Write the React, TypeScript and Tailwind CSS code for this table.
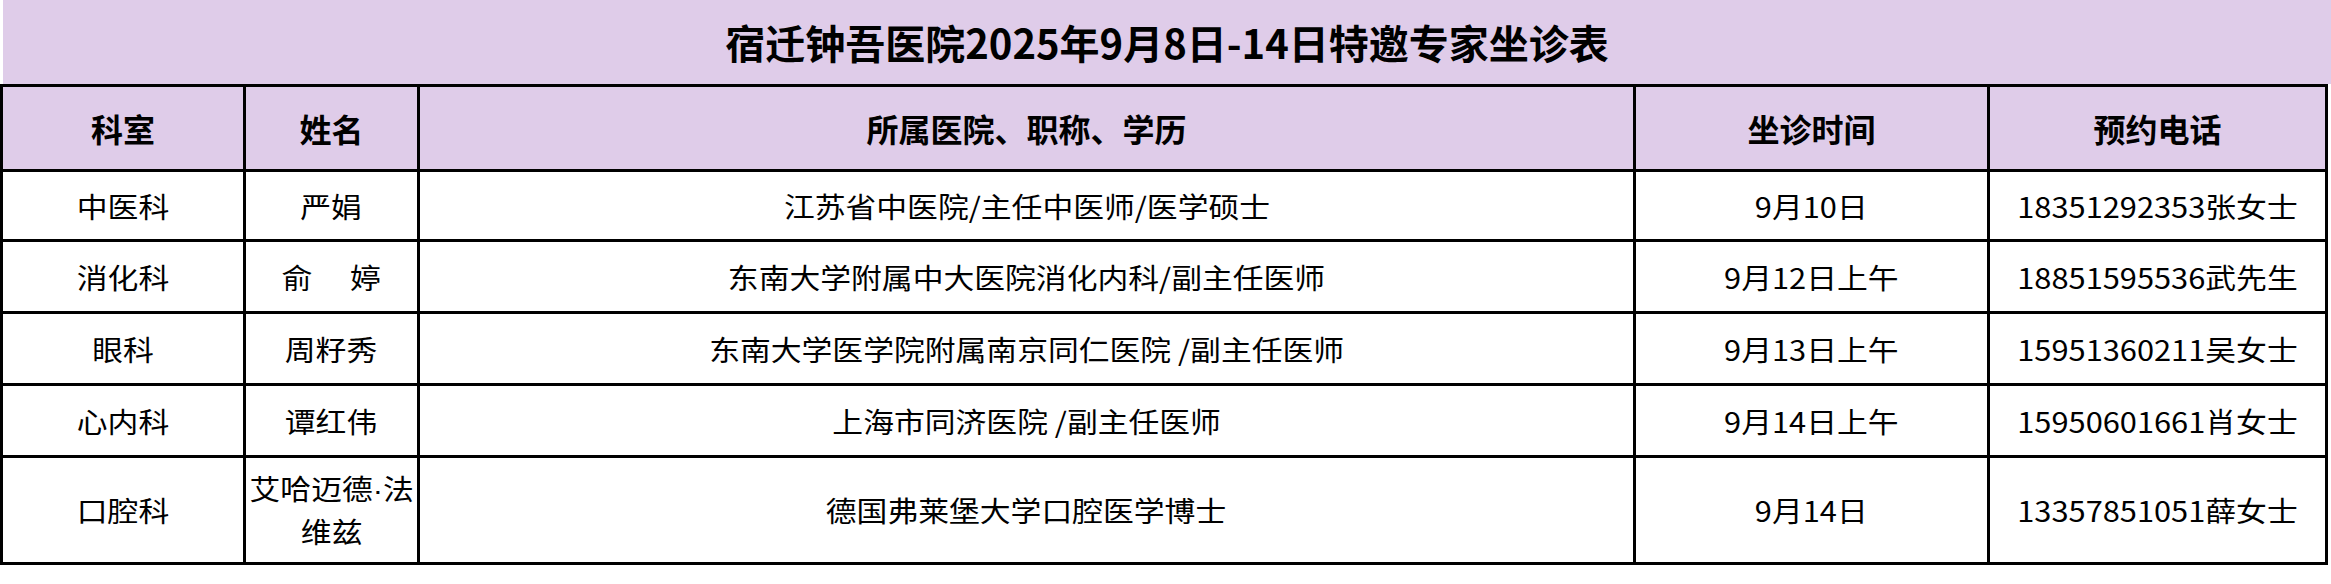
const FONT = '"Noto Sans CJK SC", "Noto Sans", sans-serif'

type Row = {
  dept: string
  name: React.ReactNode
  hospital: string
  time: string
  phone: string
  h: string
}

const ROWS: Row[] = [
  {
    dept: '中医科',
    name: '严娟',
    hospital: '江苏省中医院/主任中医师/医学硕士',
    time: '9月10日',
    phone: '18351292353张女士',
    h: 'h-[70px]',
  },
  {
    dept: '消化科',
    name: <span className="whitespace-pre">{'俞 \u3000婷'}</span>,
    hospital: '东南大学附属中大医院消化内科/副主任医师',
    time: '9月12日上午',
    phone: '18851595536武先生',
    h: 'h-[72px]',
  },
  {
    dept: '眼科',
    name: '周籽秀',
    hospital: '东南大学医学院附属南京同仁医院 /副主任医师',
    time: '9月13日上午',
    phone: '15951360211吴女士',
    h: 'h-[72px]',
  },
  {
    dept: '心内科',
    name: '谭红伟',
    hospital: '上海市同济医院 /副主任医师',
    time: '9月14日上午',
    phone: '15950601661肖女士',
    h: 'h-[72px]',
  },
  {
    dept: '口腔科',
    name: (
      <span className="flex flex-col items-center leading-[41px]">
        <span>
          艾哈迈德<span className="font-['Liberation_Sans',sans-serif]">·</span>法
        </span>
        <span>维兹</span>
      </span>
    ),
    hospital: '德国弗莱堡大学口腔医学博士',
    time: '9月14日',
    phone: '13357851051薛女士',
    h: 'h-[107px]',
  },
]

const HEADERS = ['科室', '姓名', '所属医院、职称、学历', '坐诊时间', '预约电话']

const cell = 'flex items-center justify-center border-r-[3px] border-b-[3px] border-black'

function Body({ children }: { children: React.ReactNode }) {
  return <span className="inline-block scale-x-[1.1] text-[28px] leading-none">{children}</span>
}

export default function App() {
  return (
    <div className="w-[2331px] h-[584px] bg-white text-black" style={{ fontFamily: FONT }}>
      <div className="ml-[3px] h-[84px] bg-[#dfcce9] flex items-center justify-center">
        <h1 className="text-[40px] font-bold leading-none">宿迁钟吾医院2025年9月8日-14日特邀专家坐诊表</h1>
      </div>

      <div className="w-[2328px] grid grid-cols-[243px_174px_1216px_354px_338px] border-l-[3px] border-t-[3px] border-black">
        {HEADERS.map((t) => (
          <div key={t} className={`${cell} h-[85px] bg-[#dfcce9] text-[32px] font-bold`}>
            {t}
          </div>
        ))}

        {ROWS.map((r) => (
          <div key={r.dept} className="contents">
            <div className={`${cell} ${r.h}`}>
              <Body>{r.dept}</Body>
            </div>
            <div className={`${cell} ${r.h}`}>
              <Body>{r.name}</Body>
            </div>
            <div className={`${cell} ${r.h}`}>
              <Body>
                <span className="whitespace-pre">{r.hospital}</span>
              </Body>
            </div>
            <div className={`${cell} ${r.h}`}>
              <Body>{r.time}</Body>
            </div>
            <div className={`${cell} ${r.h}`}>
              <Body>{r.phone}</Body>
            </div>
          </div>
        ))}
      </div>
    </div>
  )
}
